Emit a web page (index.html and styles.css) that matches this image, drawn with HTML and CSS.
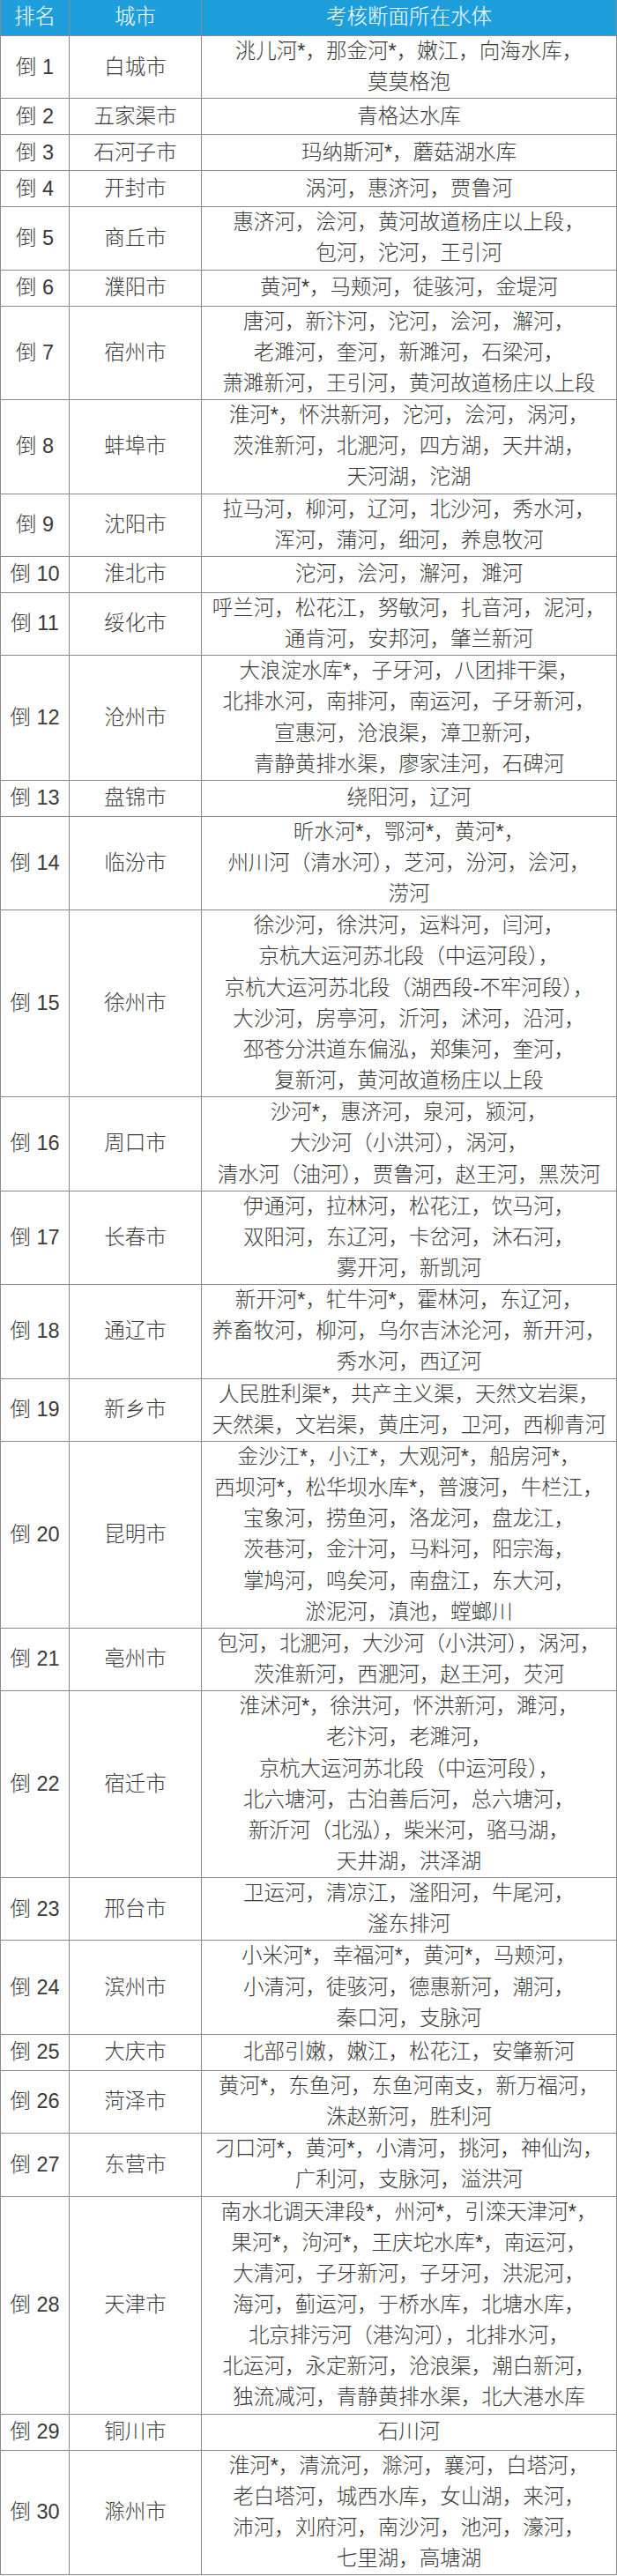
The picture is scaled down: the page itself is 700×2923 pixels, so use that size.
FILE: index.html
```html
<!DOCTYPE html>
<html lang="zh-CN">
<head>
<meta charset="utf-8">
<title>考核断面所在水体</title>
<link rel="stylesheet" href="styles.css">
</head>
<body>
<div class="table">
  <div class="cell head">排名</div><div class="cell head">城市</div><div class="cell head">考核断面所在水体</div>

  <div class="cell">倒 1</div><div class="cell">白城市</div><div class="cell">洮儿河*，那金河*，嫩江，向海水库，<br>莫莫格泡</div>
  <div class="cell">倒 2</div><div class="cell">五家渠市</div><div class="cell">青格达水库</div>
  <div class="cell">倒 3</div><div class="cell">石河子市</div><div class="cell">玛纳斯河*，蘑菇湖水库</div>
  <div class="cell">倒 4</div><div class="cell">开封市</div><div class="cell">涡河，惠济河，贾鲁河</div>
  <div class="cell">倒 5</div><div class="cell">商丘市</div><div class="cell">惠济河，浍河，黄河故道杨庄以上段，<br>包河，沱河，王引河</div>
  <div class="cell">倒 6</div><div class="cell">濮阳市</div><div class="cell">黄河*，马颊河，徒骇河，金堤河</div>
  <div class="cell">倒 7</div><div class="cell">宿州市</div><div class="cell">唐河，新汴河，沱河，浍河，澥河，<br>老濉河，奎河，新濉河，石梁河，<br>萧濉新河，王引河，黄河故道杨庄以上段</div>
  <div class="cell">倒 8</div><div class="cell">蚌埠市</div><div class="cell">淮河*，怀洪新河，沱河，浍河，涡河，<br>茨淮新河，北淝河，四方湖，天井湖，<br>天河湖，沱湖</div>
  <div class="cell">倒 9</div><div class="cell">沈阳市</div><div class="cell">拉马河，柳河，辽河，北沙河，秀水河，<br>浑河，蒲河，细河，养息牧河</div>
  <div class="cell">倒 10</div><div class="cell">淮北市</div><div class="cell">沱河，浍河，澥河，濉河</div>
  <div class="cell">倒 11</div><div class="cell">绥化市</div><div class="cell">呼兰河，松花江，努敏河，扎音河，泥河，<br>通肯河，安邦河，肇兰新河</div>
  <div class="cell">倒 12</div><div class="cell">沧州市</div><div class="cell">大浪淀水库*，子牙河，八团排干渠，<br>北排水河，南排河，南运河，子牙新河，<br>宣惠河，沧浪渠，漳卫新河，<br>青静黄排水渠，廖家洼河，石碑河</div>
  <div class="cell">倒 13</div><div class="cell">盘锦市</div><div class="cell">绕阳河，辽河</div>
  <div class="cell">倒 14</div><div class="cell">临汾市</div><div class="cell">昕水河*，鄂河*，黄河*，<br>州川河（清水河），芝河，汾河，浍河，<br>涝河</div>
  <div class="cell">倒 15</div><div class="cell">徐州市</div><div class="cell">徐沙河，徐洪河，运料河，闫河，<br>京杭大运河苏北段（中运河段），<br>京杭大运河苏北段（湖西段-不牢河段），<br>大沙河，房亭河，沂河，沭河，沿河，<br>邳苍分洪道东偏泓，郑集河，奎河，<br>复新河，黄河故道杨庄以上段</div>
  <div class="cell">倒 16</div><div class="cell">周口市</div><div class="cell">沙河*，惠济河，泉河，颍河，<br>大沙河（小洪河），涡河，<br>清水河（油河），贾鲁河，赵王河，黑茨河</div>
  <div class="cell">倒 17</div><div class="cell">长春市</div><div class="cell">伊通河，拉林河，松花江，饮马河，<br>双阳河，东辽河，卡岔河，沐石河，<br>雾开河，新凯河</div>
  <div class="cell">倒 18</div><div class="cell">通辽市</div><div class="cell">新开河*，牤牛河*，霍林河，东辽河，<br>养畜牧河，柳河，乌尔吉沐沦河，新开河，<br>秀水河，西辽河</div>
  <div class="cell">倒 19</div><div class="cell">新乡市</div><div class="cell">人民胜利渠*，共产主义渠，天然文岩渠，<br>天然渠，文岩渠，黄庄河，卫河，西柳青河</div>
  <div class="cell">倒 20</div><div class="cell">昆明市</div><div class="cell">金沙江*，小江*，大观河*，船房河*，<br>西坝河*，松华坝水库*，普渡河，牛栏江，<br>宝象河，捞鱼河，洛龙河，盘龙江，<br>茨巷河，金汁河，马料河，阳宗海，<br>掌鸠河，鸣矣河，南盘江，东大河，<br>淤泥河，滇池，螳螂川</div>
  <div class="cell">倒 21</div><div class="cell">亳州市</div><div class="cell">包河，北淝河，大沙河（小洪河），涡河，<br>茨淮新河，西淝河，赵王河，芡河</div>
  <div class="cell">倒 22</div><div class="cell">宿迁市</div><div class="cell">淮沭河*，徐洪河，怀洪新河，濉河，<br>老汴河，老濉河，<br>京杭大运河苏北段（中运河段），<br>北六塘河，古泊善后河，总六塘河，<br>新沂河（北泓），柴米河，骆马湖，<br>天井湖，洪泽湖</div>
  <div class="cell">倒 23</div><div class="cell">邢台市</div><div class="cell">卫运河，清凉江，滏阳河，牛尾河，<br>滏东排河</div>
  <div class="cell">倒 24</div><div class="cell">滨州市</div><div class="cell">小米河*，幸福河*，黄河*，马颊河，<br>小清河，徒骇河，德惠新河，潮河，<br>秦口河，支脉河</div>
  <div class="cell">倒 25</div><div class="cell">大庆市</div><div class="cell">北部引嫩，嫩江，松花江，安肇新河</div>
  <div class="cell">倒 26</div><div class="cell">菏泽市</div><div class="cell">黄河*，东鱼河，东鱼河南支，新万福河，<br>洙赵新河，胜利河</div>
  <div class="cell">倒 27</div><div class="cell">东营市</div><div class="cell">刁口河*，黄河*，小清河，挑河，神仙沟，<br>广利河，支脉河，溢洪河</div>
  <div class="cell">倒 28</div><div class="cell">天津市</div><div class="cell">南水北调天津段*，州河*，引滦天津河*，<br>果河*，泃河*，王庆坨水库*，南运河，<br>大清河，子牙新河，子牙河，洪泥河，<br>海河，蓟运河，于桥水库，北塘水库，<br>北京排污河（港沟河），北排水河，<br>北运河，永定新河，沧浪渠，潮白新河，<br>独流减河，青静黄排水渠，北大港水库</div>
  <div class="cell">倒 29</div><div class="cell">铜川市</div><div class="cell">石川河</div>
  <div class="cell">倒 30</div><div class="cell">滁州市</div><div class="cell">淮河*，清流河，滁河，襄河，白塔河，<br>老白塔河，城西水库，女山湖，来河，<br>沛河，刘府河，南沙河，池河，濠河，<br>七里湖，高塘湖</div>
</div>
</body>
</html>
```

FILE: styles.css
```css
html, body {
  margin: 0;
  padding: 0;
  background: #ffffff;
}

body {
  font-family: "Liberation Sans", "Noto Sans CJK SC", sans-serif;
  font-size: 23.5px;
  font-weight: 300;
  color: #3a3a3a;
}

.table {
  display: grid;
  grid-template-columns: 78px 150px 471px;
  width: 700px;
  border-left: 1px solid #8a8a8a;
  box-sizing: border-box;
}

.cell {
  display: flex;
  align-items: center;
  justify-content: center;
  text-align: center;
  min-height: 40px;
  line-height: 35.15px;
  white-space: nowrap;
  border-right: 1px solid #8a8a8a;
  border-bottom: 1px solid #8a8a8a;
}

.head {
  height: 40px;
  background: #1e9fdb;
  color: #ffffff;
}
```
